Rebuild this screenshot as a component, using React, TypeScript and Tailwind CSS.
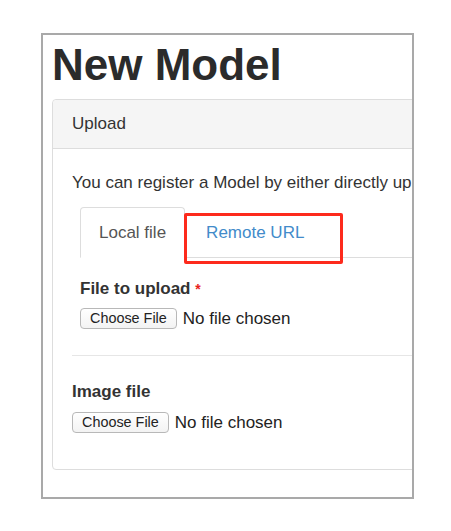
function FileInput() {
  return (
    <div className="flex items-center gap-[6px]">
      <button
        type="button"
        className="h-[21px] px-[9px] rounded-[4px] border border-[#b8b8b8] bg-gradient-to-b from-white to-[#f3f3f3] text-[14.4px] leading-none text-[#222]"
      >
        Choose File
      </button>
      <span className="text-[17px] leading-[20px] text-[#222]">No file chosen</span>
    </div>
  )
}

export default function App() {
  return (
    <div className="h-[531px] overflow-hidden pt-[33px] bg-white font-['Liberation_Sans',Arial,sans-serif] text-[#333]">
      <div className="ml-[41px] w-[373px] h-[466px] overflow-hidden border-2 border-[#a9a9a9] pl-[9px]">
        <h1 className="mt-[6px] text-[44px] leading-[48px] font-bold text-[#2b2b2b] whitespace-nowrap">
          New Model
        </h1>

        <div className="mt-[10px] w-[640px] rounded-[4px] border border-[#dddddd]">
          <div className="py-[14px] px-[19px] bg-[#f5f5f5] border-b border-[#dddddd] text-[17px] leading-[20px] rounded-t-[4px]">
            Upload
          </div>

          <div className="pt-[24px] pb-[36px] px-[19px]">
            <p className="text-[17px] leading-[20px] whitespace-nowrap">
              You can register a Model by either directly uploading a file or providing a remote URL.
            </p>

            <div className="mt-[14px] ml-[8px]">
              <div className="relative flex border-b border-[#dddddd]">
                <div className="-mb-px pt-[15px] pb-[14px] px-[18px] bg-white border border-[#dddddd] border-b-white rounded-t-[4px] text-[17px] leading-[20px] text-[#555]">
                  Local file
                </div>
                <div className="ml-[2px] -mb-px pt-[15px] pb-[14px] px-[18px] border border-transparent text-[17px] leading-[20px] text-[#428bca]">
                  Remote URL
                </div>
                <div className="absolute left-[104px] top-[6px] w-[159px] h-[51px] border-[3px] border-[#fd2a1c] rounded-[2px]" />
              </div>

              <div className="pt-[21px]">
                <label className="block text-[17px] leading-[20px] font-bold">
                  File to upload <span className="text-[#e8231a] text-[14px] align-top">*</span>
                </label>
                <div className="mt-[9px]">
                  <FileInput />
                </div>
              </div>
            </div>

            <div className="mt-[26px] border-t border-[#e6e6e6]" />

            <div className="pt-[26px]">
              <label className="block text-[17px] leading-[20px] font-bold">Image file</label>
              <div className="mt-[10px]">
                <FileInput />
              </div>
            </div>
          </div>
        </div>
      </div>
    </div>
  )
}
